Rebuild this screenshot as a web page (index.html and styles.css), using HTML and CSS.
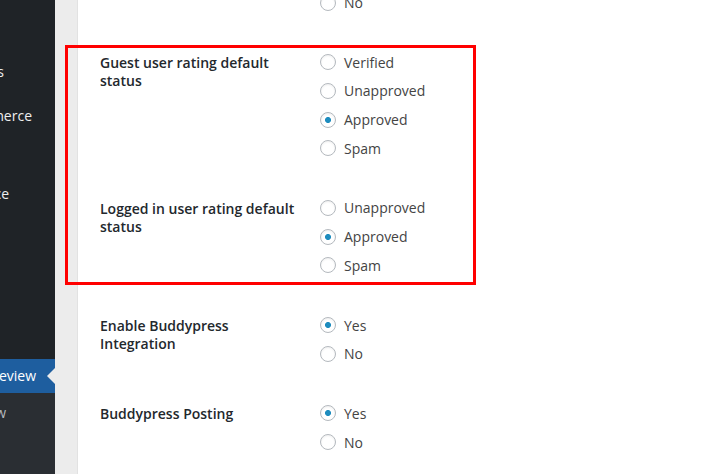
FILE: index.html
```html
<!DOCTYPE html>
<html lang="en">
<head>
<meta charset="utf-8">
<title>WP Review settings</title>
<link rel="stylesheet" href="styles.css">
</head>
<body>
<div class="page">
  <nav class="sidebar">
    <div class="menu-top">
      <div class="mi mi-settings"><span>Settings</span></div>
      <div class="mi mi-woo"><span>WooCommerce</span></div>
      <div class="mi mi-appearance"><span>Appearance</span></div>
      <div class="mi mi-active"><span>WP Review</span><i class="notch"></i></div>
    </div>
    <div class="submenu">
      <div class="mi si"><span>Overview</span></div>
    </div>
  </nav>
  <main class="content">
    <div class="panel">
      <div class="form-table">
        <div class="row">
          <div class="th">Enable user ratings</div>
          <div class="td">
            <label class="opt"><input type="radio" name="r0" checked> Yes</label>
            <label class="opt"><input type="radio" name="r0"> No</label>
          </div>
        </div>
        <div class="row">
          <div class="th">Guest user rating default status</div>
          <div class="td">
            <label class="opt"><input type="radio" name="r1"> Verified</label>
            <label class="opt"><input type="radio" name="r1"> Unapproved</label>
            <label class="opt"><input type="radio" name="r1" checked> Approved</label>
            <label class="opt"><input type="radio" name="r1"> Spam</label>
          </div>
        </div>
        <div class="row">
          <div class="th">Logged in user rating default status</div>
          <div class="td">
            <label class="opt"><input type="radio" name="r2"> Unapproved</label>
            <label class="opt"><input type="radio" name="r2" checked> Approved</label>
            <label class="opt"><input type="radio" name="r2"> Spam</label>
          </div>
        </div>
        <div class="row">
          <div class="th">Enable Buddypress Integration</div>
          <div class="td">
            <label class="opt"><input type="radio" name="r3" checked> Yes</label>
            <label class="opt"><input type="radio" name="r3"> No</label>
          </div>
        </div>
        <div class="row">
          <div class="th">Buddypress Posting</div>
          <div class="td">
            <label class="opt"><input type="radio" name="r4" checked> Yes</label>
            <label class="opt"><input type="radio" name="r4"> No</label>
          </div>
        </div>
      </div>
    </div>
  </main>
  <div class="highlight"></div>
</div>
</body>
</html>
```
FILE: styles.css
```css
* { box-sizing: border-box; }

html, body {
  margin: 0;
  padding: 0;
  height: 100%;
  overflow: hidden;
}

body {
  font-family: "Open Sans", "Liberation Sans", sans-serif;
  font-size: 14px;
  background: #ececec;
}

.page {
  position: relative;
  display: flex;
  height: 474px;
}

/* Sidebar */
.sidebar {
  width: 55px;
  flex: 0 0 55px;
  display: flex;
  flex-direction: column;
  background: #1f2327;
  overflow: hidden;
}

.menu-top {
  display: flex;
  flex-direction: column;
}

.mi {
  position: relative;
  display: flex;
  justify-content: flex-end;
  height: 34px;
  line-height: 34px;
  color: #eeeeee;
  white-space: nowrap;
}

.mi span { flex: 0 0 auto; }

.mi-settings { margin-top: 55px; padding-right: 51px; }
.mi-woo { margin-top: 10px; padding-right: 23px; }
.mi-appearance { margin-top: 44px; padding-right: 46px; }

.mi-active {
  margin-top: 148px;
  padding-right: 19px;
  background: #1e5e9f;
  color: #ffffff;
}

.notch {
  position: absolute;
  right: 0;
  top: 9px;
  width: 0;
  height: 0;
  border-top: 8px solid transparent;
  border-bottom: 8px solid transparent;
  border-right: 8px solid #ececec;
}

.submenu {
  flex: 1;
  background: #2a2e33;
  padding-top: 7px;
}

.si {
  height: 26px;
  line-height: 26px;
  padding-right: 49px;
  color: #b4b9be;
}

/* Content */
.content {
  flex: 1;
  background: #ececec;
  padding-left: 22px;
}

.panel {
  display: flow-root;
  height: 100%;
  background: #ffffff;
  border-left: 1px solid #e2e2e2;
  padding-left: 22px;
}

.form-table {
  margin-top: -56px;
  display: flex;
  flex-direction: column;
}

.row {
  display: grid;
  grid-template-columns: 220px 1fr;
  padding: 15.5px 0;
}

.th {
  width: 200px;
  padding-top: 6px;
  font-weight: 600;
  line-height: 18px;
  color: #23282d;
}

.td {
  display: flex;
  flex-direction: column;
}

.opt {
  display: flex;
  align-items: center;
  gap: 8px;
  height: 28.7px;
  color: #444444;
}

.opt input {
  appearance: none;
  -webkit-appearance: none;
  margin: 0;
  width: 16px;
  height: 16px;
  flex: 0 0 16px;
  border: 1px solid #b4b9be;
  border-radius: 50%;
  background: #ffffff;
  box-shadow: inset 0 1px 2px rgba(0, 0, 0, 0.07);
}

.opt input:checked {
  background: radial-gradient(circle, #1e8cbe 0, #1e8cbe 2.6px, #ffffff 3.4px);
}

/* Annotation box */
.highlight {
  position: absolute;
  left: 65px;
  top: 45px;
  width: 411px;
  height: 240px;
  border: 3px solid #ff0000;
  pointer-events: none;
}
```
